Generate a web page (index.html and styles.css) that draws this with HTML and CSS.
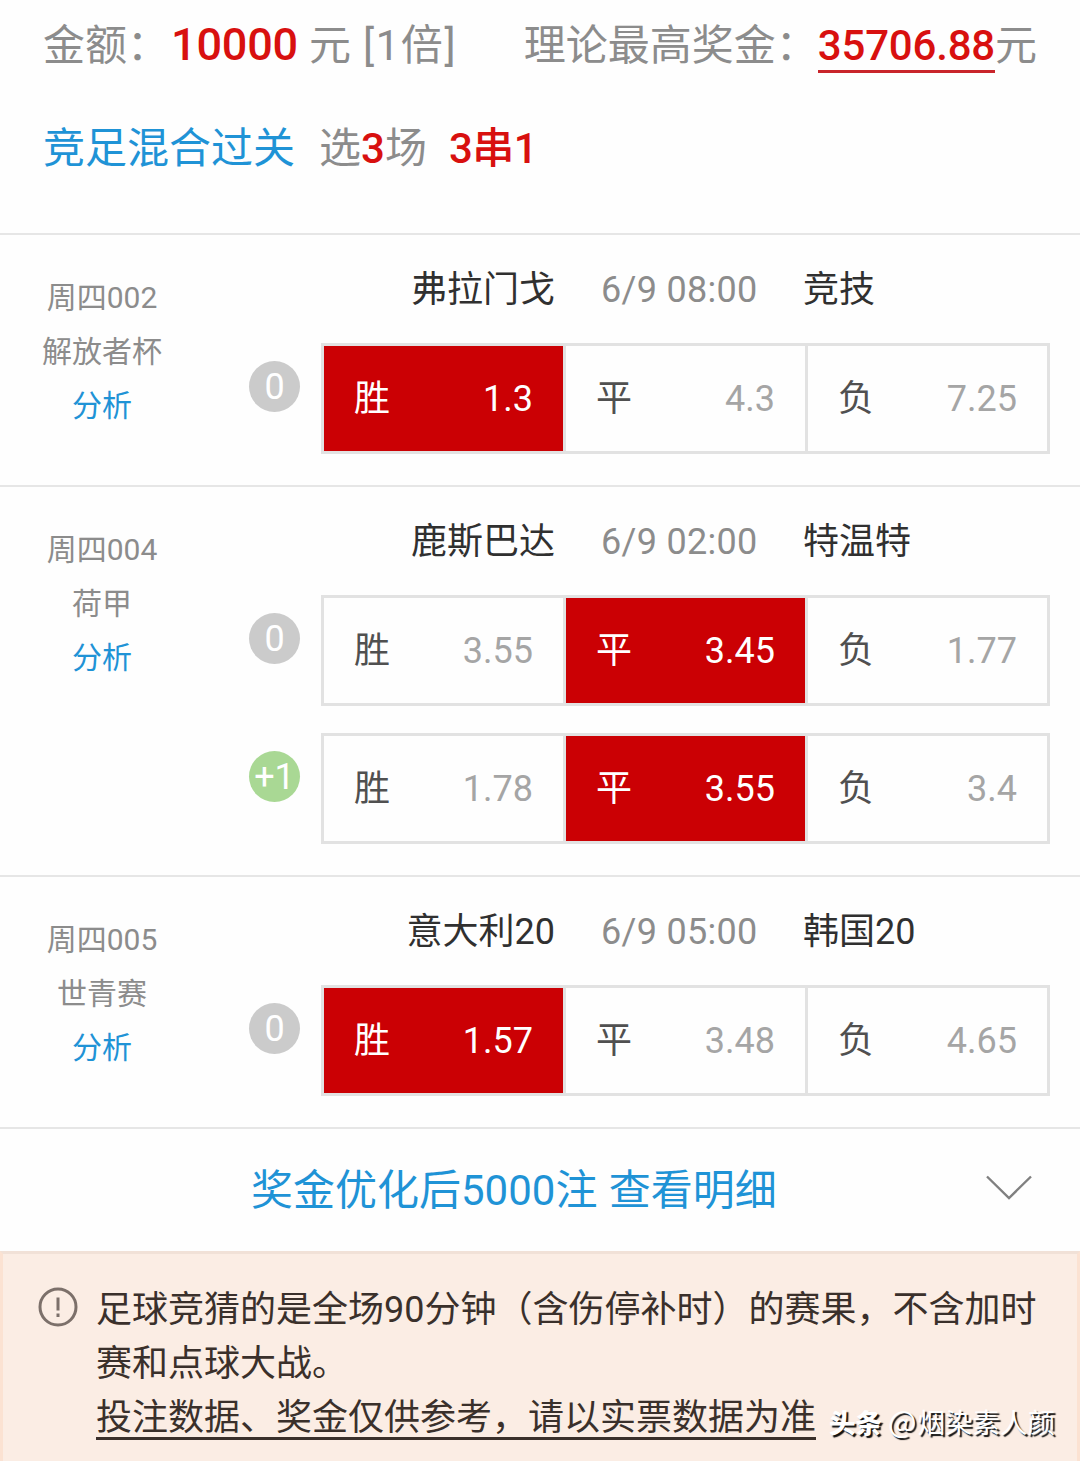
FILE: index.html
```html
<!DOCTYPE html>
<html lang="zh-CN">
<head>
<meta charset="utf-8">
<title>竞足混合过关</title>
<link rel="stylesheet" href="styles.css">
</head>
<body>
<header class="summary">
  <div class="summary-line">
    <span>金额：</span><span class="amount">10000</span><span class="unit">元</span><span class="times">[1倍]</span>
    <span class="prize-label">理论最高奖金：</span><span class="prize">35706.88</span><span>元</span>
  </div>
  <div class="summary-line type-line">
    <span class="play">竞足混合过关</span><span class="picked">选<b>3</b>场</span><b class="combo">3串1</b>
  </div>
</header>

<section class="match">
  <div class="info"><span>周四002</span><span>解放者杯</span><a class="analysis">分析</a></div>
  <div class="detail">
    <div class="teams"><span class="home">弗拉门戈</span><span class="time">6/9 08:00</span><span>竞技</span></div>
    <div class="bet">
      <span class="handicap">0</span>
      <div class="options">
        <div class="option selected"><span>胜</span><span class="odds">1.3</span></div>
        <div class="option"><span>平</span><span class="odds">4.3</span></div>
        <div class="option"><span>负</span><span class="odds">7.25</span></div>
      </div>
    </div>
  </div>
</section>

<section class="match">
  <div class="info"><span>周四004</span><span>荷甲</span><a class="analysis">分析</a></div>
  <div class="detail">
    <div class="teams"><span class="home">鹿斯巴达</span><span class="time">6/9 02:00</span><span>特温特</span></div>
    <div class="bet">
      <span class="handicap">0</span>
      <div class="options">
        <div class="option"><span>胜</span><span class="odds">3.55</span></div>
        <div class="option selected"><span>平</span><span class="odds">3.45</span></div>
        <div class="option"><span>负</span><span class="odds">1.77</span></div>
      </div>
    </div>
    <div class="bet">
      <span class="handicap plus">+1</span>
      <div class="options">
        <div class="option"><span>胜</span><span class="odds">1.78</span></div>
        <div class="option selected"><span>平</span><span class="odds">3.55</span></div>
        <div class="option"><span>负</span><span class="odds">3.4</span></div>
      </div>
    </div>
  </div>
</section>

<section class="match">
  <div class="info"><span>周四005</span><span>世青赛</span><a class="analysis">分析</a></div>
  <div class="detail">
    <div class="teams"><span class="home">意大利20</span><span class="time">6/9 05:00</span><span>韩国20</span></div>
    <div class="bet">
      <span class="handicap">0</span>
      <div class="options">
        <div class="option selected"><span>胜</span><span class="odds">1.57</span></div>
        <div class="option"><span>平</span><span class="odds">3.48</span></div>
        <div class="option"><span>负</span><span class="odds">4.65</span></div>
      </div>
    </div>
  </div>
</section>

<div class="more">
  <span class="more-text">奖金优化后5000注 查看明细</span>
  <svg class="chevron" width="48" height="26" viewBox="0 0 48 26" fill="none" stroke="#808080" stroke-width="2.4"><path d="M2 1.5 24 23 46 1.5"/></svg>
</div>

<footer class="notice">
  <svg class="warn" width="40" height="40" viewBox="0 0 40 40" fill="none" stroke="#7c706a" stroke-width="3"><circle cx="20" cy="20" r="18"/><path d="M20 10.5V23.5M20 26.5V30"/></svg>
  <div class="notice-text">
    <p>足球竞猜的是全场90分钟（含伤停补时）的赛果，不含加时赛和点球大战。</p>
    <p><span class="underlined">投注数据、奖金仅供参考，请以实票数据为准</span></p>
  </div>
  <div class="watermark"><b>头条</b><span><span class="at">@</span>烟染素人颜</span></div>
</footer>
</body>
</html>
```

FILE: styles.css
```css
* { box-sizing: border-box; }

body {
  margin: 0;
  width: 1080px;
  height: 1461px;
  overflow: hidden;
  display: flex;
  flex-direction: column;
  background: #fefefe;
  color: #8c8c8c;
  font-family: Roboto, "Noto Sans CJK SC", sans-serif;
  font-size: 36px;
}

.summary {
  height: 233px;
  padding: 15px 0 0 43px;
  font-size: 42px;
}

.summary-line {
  display: flex;
  align-items: baseline;
  height: 60px;
  line-height: 60px;
  white-space: nowrap;
}

.amount {
  margin-left: 2px;
  font-size: 45px;
  font-weight: 500;
  letter-spacing: -0.2px;
  color: #d8100f;
}

.unit { margin-left: 11px; }

.times {
  margin-left: 12px;
  letter-spacing: 1.6px;
}

.prize-label { margin-left: auto; }

.summary-line:first-child { padding-right: 43px; }

.prize {
  height: 57px;
  border-bottom: 3px solid #c9252b;
  font-weight: 500;
  letter-spacing: -0.2px;
  color: #d8100f;
}

.type-line { margin-top: 44px; }
.type-line b { font-weight: 500; color: #d8100f; }
.play { color: #1f93d6; }
.picked { margin-left: 24px; }
.type-line .combo { margin-left: 22px; letter-spacing: -0.5px; }

.match {
  display: flex;
  border-top: 2px solid #e6e6e6;
  padding-bottom: 31px;
}

.info {
  width: 204px;
  padding-top: 36px;
  display: flex;
  flex-direction: column;
  align-items: center;
  font-size: 30px;
  line-height: 54px;
}

.analysis { color: #1f93d6; }

.detail {
  flex: 1;
  padding: 25px 30px 0 45px;
}

.teams {
  display: grid;
  grid-template-columns: 306px 156px 1fr;
  column-gap: 46px;
  height: 83px;
  line-height: 61px;
  color: #303030;
  white-space: nowrap;
}

.home { text-align: right; }
.time { color: #8c8c8c; letter-spacing: 0.3px; }

.bet {
  display: flex;
  gap: 21px;
}

.bet + .bet { margin-top: 27px; }

.handicap {
  width: 51px;
  height: 51px;
  margin-top: 18px;
  border-radius: 50%;
  background: #cbcbcb;
  color: #fff;
  line-height: 53px;
  text-align: center;
}

.handicap.plus { background: #a9d894; }

.options {
  width: 729px;
  height: 111px;
  padding: 3px;
  display: grid;
  grid-template-columns: repeat(3, 1fr);
  gap: 3px;
  background: #e2e2e2;
}

.option {
  display: flex;
  justify-content: space-between;
  padding: 2px 30px 0;
  background: #fefefe;
  color: #505050;
  line-height: 103px;
}

.odds { color: #a5a5a5; }

.selected { background: #cb0004; }
.selected, .selected .odds { color: #fff; }

.more {
  height: 124px;
  border-top: 2px solid #e6e6e6;
  padding: 0 47px 0 251px;
  display: flex;
  justify-content: space-between;
  align-items: flex-start;
}

.more-text {
  font-size: 42px;
  line-height: 60px;
  padding-top: 32px;
  word-spacing: 1px;
  color: #1f93d6;
}

.chevron { margin-top: 46px; }

.notice {
  flex: 1;
  position: relative;
  display: flex;
  border: 3px solid #fbe2d2;
  border-top-color: #f1e1d7;
  border-bottom: 0;
  padding: 29px 0 0 35px;
  background: #fbede4;
  color: #3a302b;
}

.warn { margin-top: 4px; flex: none; }

.notice-text {
  width: 942px;
  margin-left: 18px;
  line-height: 54px;
}

.notice-text p { margin: 0; }

.underlined {
  display: inline-block;
  height: 49px;
  border-bottom: 3px solid #3a302b;
}

.watermark {
  position: absolute;
  right: 22px;
  bottom: 21px;
  display: flex;
  align-items: baseline;
  gap: 6px;
  font-family: "Noto Sans CJK SC", sans-serif;
  font-size: 27.5px;
  line-height: 36px;
  color: #fff;
  text-shadow: 2px 2px 1px #111;
}

.at { font-size: 30px; letter-spacing: 1px; }

.watermark b {
  font-size: 26.5px;
  font-weight: 900;
}
```
